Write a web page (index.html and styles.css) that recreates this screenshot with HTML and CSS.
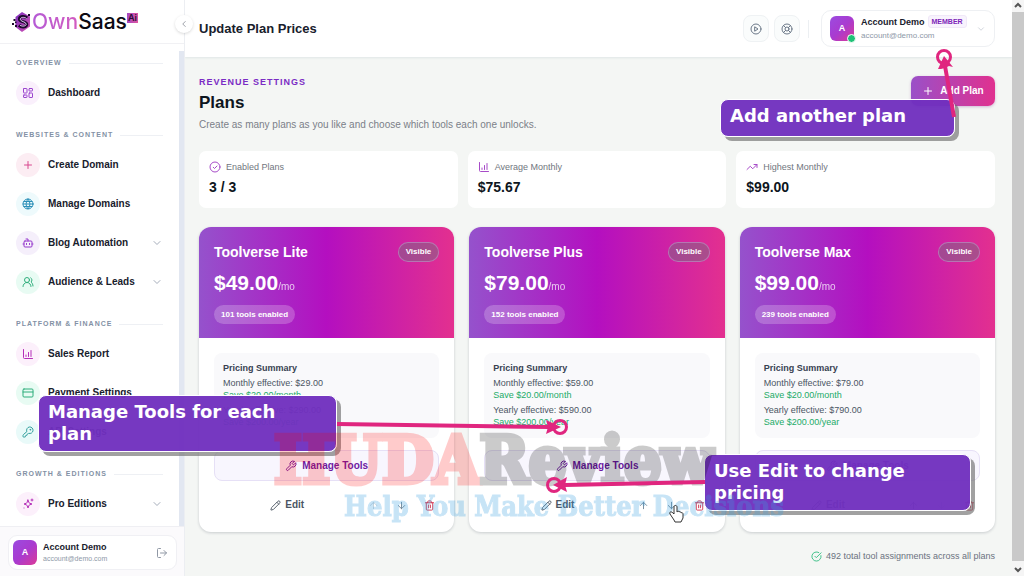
FILE: index.html
```html
<!DOCTYPE html>
<html lang="en">
<head>
    <meta charset="UTF-8">
    <meta name="viewport" content="width=device-width, initial-scale=1.0">
    <title>Update Plan Prices</title>
    <link rel="stylesheet" href="styles.css">
</head>
<body>
    <!-- Icon set -->
    <svg class="sprite" aria-hidden="true">
        <symbol id="i-grid" viewBox="0 0 24 24"><rect x="3" y="3" width="7" height="9" rx="1"/><rect x="14" y="3" width="7" height="5" rx="1"/><rect x="14" y="12" width="7" height="9" rx="1"/><rect x="3" y="16" width="7" height="5" rx="1"/></symbol>
        <symbol id="i-plus" viewBox="0 0 24 24"><path d="M5 12h14M12 5v14"/></symbol>
        <symbol id="i-globe" viewBox="0 0 24 24"><circle cx="12" cy="12" r="10"/><path d="M12 2a14.5 14.5 0 0 0 0 20 14.5 14.5 0 0 0 0-20M2 12h20M4 7h16M4 17h16"/></symbol>
        <symbol id="i-bot" viewBox="0 0 24 24"><path d="M12 8V4H8M2 14h2M20 14h2M15 13v2M9 13v2"/><rect x="4" y="8" width="16" height="12" rx="2"/></symbol>
        <symbol id="i-users" viewBox="0 0 24 24"><circle cx="10" cy="8" r="5"/><path d="M18 21a8 8 0 0 0-16 0M22 20c0-3.4-2-6.500-4-8a5 5 0 0 0-.5-8.300"/></symbol>
        <symbol id="i-chart" viewBox="0 0 24 24"><path d="M3 3v16a2 2 0 0 0 2 2h16M8 17v-3M13 17V9M18 17V5"/></symbol>
        <symbol id="i-card" viewBox="0 0 24 24"><rect x="2" y="4" width="20" height="16" rx="2"/><path d="M2 10h20"/></symbol>
        <symbol id="i-key" viewBox="0 0 24 24"><path d="M2.600 17.400A2 2 0 0 0 2 18.800V21a1 1 0 0 0 1 1h3a1 1 0 0 0 1-1v-1a1 1 0 0 1 1-1h1a1 1 0 0 0 1-1v-1a1 1 0 0 1 1-1h.2a2 2 0 0 0 1.400-.6l.8-.8a6.500 6.500 0 1 0-4-4z"/><circle cx="16.500" cy="7.500" r=".8"/></symbol>
        <symbol id="i-sparkles" viewBox="0 0 24 24"><path d="M12 4l2 5.500a1 1 0 0 0 .6.6L20 12l-5.400 2a1 1 0 0 0-.6.6L12 20l-2-5.400a1 1 0 0 0-.6-.6L4 12l5.400-1.900a1 1 0 0 0 .6-.6zM20 2v4M22 4h-4M4 20h.1"/></symbol>
        <symbol id="i-down" viewBox="0 0 24 24"><path d="M6 9l6 6 6-6"/></symbol>
        <symbol id="i-left" viewBox="0 0 24 24"><path d="M15 18l-6-6 6-6"/></symbol>
        <symbol id="i-logout" viewBox="0 0 24 24"><path d="M9 21H5a2 2 0 0 1-2-2V5a2 2 0 0 1 2-2h4M16 17l5-5-5-5M21 12H9"/></symbol>
        <symbol id="i-play" viewBox="0 0 24 24"><circle cx="12" cy="12" r="10"/><path d="M10 8l6 4-6 4z"/></symbol>
        <symbol id="i-buoy" viewBox="0 0 24 24"><circle cx="12" cy="12" r="10"/><circle cx="12" cy="12" r="4"/><path d="M5 5l4.200 4.200M14.800 9.200L19 5M14.800 14.800L19 19M9.200 14.800L5 19"/></symbol>
        <symbol id="i-check" viewBox="0 0 24 24"><circle cx="12" cy="12" r="10"/><path d="M8.500 12.500l2.500 2.500 5-5"/></symbol>
        <symbol id="i-done" viewBox="0 0 24 24"><path d="M21.800 10A10 10 0 1 1 17 3.300M8.500 11.500l3 3L22 4"/></symbol>
        <symbol id="i-trend" viewBox="0 0 24 24"><path d="M16 7h6v6M22 7l-8.500 8.500-5-5L2 17"/></symbol>
        <symbol id="i-wrench" viewBox="0 0 24 24"><path d="M14.700 6.300a1 1 0 0 0 0 1.400l1.600 1.600a1 1 0 0 0 1.400 0l3.770-3.770a6 6 0 0 1-7.940 7.940l-6.910 6.910a2.120 2.120 0 0 1-3-3l6.910-6.910a6 6 0 0 1 7.940-7.940z"/></symbol>
        <symbol id="i-pencil" viewBox="0 0 24 24"><path d="M21.200 6.800a1 1 0 0 0-4-4L3.800 16.200a2 2 0 0 0-.5.800L2 21.400a.5.500 0 0 0 .6.600L7 20.700a2 2 0 0 0 .8-.5zM15 5l4 4"/></symbol>
        <symbol id="i-arrow-up" viewBox="0 0 24 24"><path d="M5 12l7-7 7 7M12 19V5"/></symbol>
        <symbol id="i-arrow-down" viewBox="0 0 24 24"><path d="M12 5v14M19 12l-7 7-7-7"/></symbol>
        <symbol id="i-trash" viewBox="0 0 24 24"><path d="M3 6h18M19 6v14a2 2 0 0 1-2 2H7a2 2 0 0 1-2-2V6M8 6V4a2 2 0 0 1 2-2h4a2 2 0 0 1 2 2v2M10 11v6M14 11v6"/></symbol>
    </svg>

    <div class="app">
        <!-- Sidebar -->
        <aside class="sidebar">
            <a class="logo" href="#">
                <svg class="logo-mark" viewBox="0 0 20 22">
                    <defs>
                        <linearGradient id="hex" x1="0" y1="0" x2="1" y2="1"><stop offset="0" stop-color="#7a2bbd"/><stop offset="1" stop-color="#d455b4"/></linearGradient>
                    </defs>
                    <path d="M10 1l8 4.500v10L10 21 3.500 16V6z" fill="url(#hex)"/>
                    <path d="M15 7C12.500 4.800 7.500 5.300 7.500 8.300c0 3 7.200 2 7.200 5 0 3-5.200 3.300-7.700 1" fill="none" stroke="#1b0a2c" stroke-width="3.200"/>
                    <path d="M14.500 7.500C12.500 5.800 8.300 6 8.300 8.300c0 2.500 5.900 2.200 5.900 4.900 0 2-4 2.500-6.200 1" fill="none" stroke="#ecc9fb" stroke-width="1"/>
                    <path d="M1.500 8h2v2h-2zM0 12h2v2H0zM3 14h2v2H3zM16 3h2v2h-2zM3 10.500h1.500V12H3z" fill="#1b0a2c"/>
                </svg>
                <span class="logo-text"><span class="logo-own">Own</span>Saas</span><span class="logo-ai">Ai</span>
            </a>
            <div class="nav-wrap">
                <nav class="nav">
                    <h2 class="nav-label">Overview</h2>
                    <a class="nav-item" href="#"><span class="bubble violet"><svg class="icon"><use href="#i-grid"/></svg></span>Dashboard</a>

                    <h2 class="nav-label">Websites &amp; Content</h2>
                    <a class="nav-item" href="#"><span class="bubble rose"><svg class="icon"><use href="#i-plus"/></svg></span>Create Domain</a>
                    <a class="nav-item" href="#"><span class="bubble sky"><svg class="icon"><use href="#i-globe"/></svg></span>Manage Domains</a>
                    <a class="nav-item" href="#"><span class="bubble purple"><svg class="icon"><use href="#i-bot"/></svg></span>Blog Automation<svg class="icon caret"><use href="#i-down"/></svg></a>
                    <a class="nav-item" href="#"><span class="bubble green"><svg class="icon"><use href="#i-users"/></svg></span>Audience &amp; Leads<svg class="icon caret"><use href="#i-down"/></svg></a>

                    <h2 class="nav-label">Platform &amp; Finance</h2>
                    <a class="nav-item" href="#"><span class="bubble pink"><svg class="icon"><use href="#i-chart"/></svg></span>Sales Report</a>
                    <a class="nav-item" href="#"><span class="bubble green"><svg class="icon"><use href="#i-card"/></svg></span>Payment Settings</a>
                    <a class="nav-item" href="#"><span class="bubble teal"><svg class="icon"><use href="#i-key"/></svg></span>API Settings</a>

                    <h2 class="nav-label">Growth &amp; Editions</h2>
                    <a class="nav-item" href="#"><span class="bubble pink"><svg class="icon"><use href="#i-sparkles"/></svg></span>Pro Editions<svg class="icon caret"><use href="#i-down"/></svg></a>
                </nav>
                <div class="nav-track"></div>
            </div>
            <div class="side-foot">
                <div class="side-user">
                    <span class="avatar">A</span>
                    <div class="user-text">
                        <div class="user-name">Account Demo</div>
                        <div class="user-mail small">account@demo.com</div>
                    </div>
                    <button class="logout" aria-label="Log out"><svg class="icon"><use href="#i-logout"/></svg></button>
                </div>
            </div>
            <button class="collapse" aria-label="Collapse sidebar"><svg class="icon"><use href="#i-left"/></svg></button>
        </aside>

        <!-- Main column -->
        <div class="main">
            <header class="topbar">
                <div class="page-title">Update Plan Prices</div>
                <button class="round-btn" aria-label="Tutorials"><svg class="icon"><use href="#i-play"/></svg></button>
                <button class="round-btn" aria-label="Support"><svg class="icon"><use href="#i-buoy"/></svg></button>
                <span class="divider"></span>
                <button class="account">
                    <span class="avatar online">A</span>
                    <span class="user-text">
                        <span class="user-line"><span class="user-name">Account Demo</span><span class="badge">MEMBER</span></span>
                        <span class="user-mail">account@demo.com</span>
                    </span>
                    <svg class="icon caret"><use href="#i-down"/></svg>
                </button>
            </header>

            <main class="content">
                <div class="intro">
                    <div>
                        <div class="kicker">REVENUE SETTINGS</div>
                        <h1>Plans</h1>
                        <p class="lead">Create as many plans as you like and choose which tools each one unlocks.</p>
                    </div>
                    <button class="add-plan"><svg class="icon"><use href="#i-plus"/></svg>Add Plan</button>
                </div>

                <section class="stats">
                    <div class="stat">
                        <div class="stat-label"><svg class="icon"><use href="#i-check"/></svg>Enabled Plans</div>
                        <div class="stat-value">3 / 3</div>
                    </div>
                    <div class="stat">
                        <div class="stat-label"><svg class="icon"><use href="#i-chart"/></svg>Average Monthly</div>
                        <div class="stat-value">$75.67</div>
                    </div>
                    <div class="stat">
                        <div class="stat-label"><svg class="icon"><use href="#i-trend"/></svg>Highest Monthly</div>
                        <div class="stat-value">$99.00</div>
                    </div>
                </section>

                <section class="plans">
                    <article class="plan">
                        <div class="plan-head">
                            <div class="plan-top"><h3>Toolverse Lite</h3><span class="visible">Visible</span></div>
                            <div class="price">$49.00<small>/mo</small></div>
                            <span class="tools">101 tools enabled</span>
                        </div>
                        <div class="plan-body">
                            <div class="summary">
                                <h4>Pricing Summary</h4>
                                <p>Monthly effective: $29.00</p>
                                <p class="save">Save $20.00/month</p>
                                <p>Yearly effective: $290.00</p>
                                <p class="save">Save $200.00/year</p>
                            </div>
                            <button class="manage"><svg class="icon"><use href="#i-wrench"/></svg>Manage Tools</button>
                            <div class="actions">
                                <button class="edit"><svg class="icon"><use href="#i-pencil"/></svg>Edit</button>
                                <button class="act faded" aria-label="Move up" disabled><svg class="icon"><use href="#i-arrow-up"/></svg></button>
                                <button class="act" aria-label="Move down"><svg class="icon"><use href="#i-arrow-down"/></svg></button>
                                <button class="act danger" aria-label="Delete"><svg class="icon"><use href="#i-trash"/></svg></button>
                            </div>
                        </div>
                    </article>

                    <article class="plan">
                        <div class="plan-head">
                            <div class="plan-top"><h3>Toolverse Plus</h3><span class="visible">Visible</span></div>
                            <div class="price">$79.00<small>/mo</small></div>
                            <span class="tools">152 tools enabled</span>
                        </div>
                        <div class="plan-body">
                            <div class="summary">
                                <h4>Pricing Summary</h4>
                                <p>Monthly effective: $59.00</p>
                                <p class="save">Save $20.00/month</p>
                                <p>Yearly effective: $590.00</p>
                                <p class="save">Save $200.00/year</p>
                            </div>
                            <button class="manage"><svg class="icon"><use href="#i-wrench"/></svg>Manage Tools</button>
                            <div class="actions">
                                <button class="edit"><svg class="icon"><use href="#i-pencil"/></svg>Edit</button>
                                <button class="act" aria-label="Move up"><svg class="icon"><use href="#i-arrow-up"/></svg></button>
                                <button class="act" aria-label="Move down"><svg class="icon"><use href="#i-arrow-down"/></svg></button>
                                <button class="act danger" aria-label="Delete"><svg class="icon"><use href="#i-trash"/></svg></button>
                            </div>
                        </div>
                    </article>

                    <article class="plan">
                        <div class="plan-head">
                            <div class="plan-top"><h3>Toolverse Max</h3><span class="visible">Visible</span></div>
                            <div class="price">$99.00<small>/mo</small></div>
                            <span class="tools">239 tools enabled</span>
                        </div>
                        <div class="plan-body">
                            <div class="summary">
                                <h4>Pricing Summary</h4>
                                <p>Monthly effective: $79.00</p>
                                <p class="save">Save $20.00/month</p>
                                <p>Yearly effective: $790.00</p>
                                <p class="save">Save $200.00/year</p>
                            </div>
                            <button class="manage"><svg class="icon"><use href="#i-wrench"/></svg>Manage Tools</button>
                            <div class="actions">
                                <button class="edit"><svg class="icon"><use href="#i-pencil"/></svg>Edit</button>
                                <button class="act" aria-label="Move up"><svg class="icon"><use href="#i-arrow-up"/></svg></button>
                                <button class="act faded" aria-label="Move down" disabled><svg class="icon"><use href="#i-arrow-down"/></svg></button>
                                <button class="act danger" aria-label="Delete"><svg class="icon"><use href="#i-trash"/></svg></button>
                            </div>
                        </div>
                    </article>
                </section>

                <p class="total"><svg class="icon"><use href="#i-done"/></svg>492 total tool assignments across all plans</p>
            </main>
        </div>

        <!-- Page scrollbar -->
        <div class="scrollbar">
            <svg viewBox="0 0 12 12"><path d="M3 7l3-3 3 3"/></svg>
            <div class="thumb"></div>
            <svg viewBox="0 0 12 12"><path d="M3 4l3 3 3-3"/></svg>
        </div>
    </div>

    <!-- Tutorial callouts -->
    <div class="callout callout-add">Add another plan</div>
    <div class="callout callout-tools">Manage Tools for each plan</div>
    <div class="callout callout-edit">Use Edit to change pricing</div>

    <div class="watermark">
        <div class="mark-name"><span class="mark-red">HUDA</span>Review</div>
        <div class="mark-tag">Help You Make Better Decisions</div>
    </div>

    <svg class="arrows" viewBox="0 0 1024 576" aria-hidden="true">
        <g fill="none" stroke="#e0267f" stroke-width="4">
            <path d="M954 117L945 66M337 424l212 3M705 482l-140 3"/>
            <g stroke-width="3"><circle cx="944" cy="57" r="6.500"/><circle cx="560" cy="427" r="6.500"/><circle cx="554" cy="485" r="6.500"/></g>
        </g>
        <g fill="#e0267f">
            <path d="M944 56l9 11-4-1-4 2-4 1-3 0z"/>
            <path d="M561 427l-15 7 2-7-2-7z"/>
            <path d="M553 485l14-8-2 8 2 7z"/>
        </g>
        <path d="M674 520l-4-6c-1-2 1-3 3-1l1 1v-7c0-2 3-2 3 0v5c1-1 2-1 2 0 1-1 2 0 2 1 1-1 2 0 2 1v4l-2 4h-6z" fill="#fff" stroke="#333" stroke-width="1"/>
    </svg>
</body>
</html>
```

FILE: styles.css
```css
/* General Styles */
* {
    box-sizing: border-box;
}

body {
    margin: 0;
    overflow: hidden;
    font-family: "Liberation Sans", Arial, sans-serif;
    font-size: 10px;
    line-height: 12px;
    color: #18202c;
    background: #f4f6f4;
}

h1, h2, h3, h4, p {
    margin: 0;
}

button {
    padding: 0;
    border: none;
    background: none;
    font: inherit;
    color: inherit;
    cursor: pointer;
}

a {
    color: inherit;
    text-decoration: none;
}

.sprite {
    display: none;
}

.icon {
    width: 12px;
    height: 12px;
    flex: none;
    fill: none;
    stroke: currentColor;
    stroke-width: 2;
    stroke-linecap: round;
    stroke-linejoin: round;
}

.app {
    display: flex;
    height: 100vh;
}

/* Sidebar */
.sidebar {
    position: relative;
    display: flex;
    flex-direction: column;
    flex: none;
    width: 185px;
    background: #fff;
    border-right: 1px solid #eceef2;
}

.logo {
    display: flex;
    align-items: center;
    height: 44px;
    padding-left: 12px;
    border-bottom: 1px solid #f1f1f4;
}

.logo-mark {
    width: 20px;
    height: 22px;
}

.logo-text {
    font: 500 21px/24px Inter, sans-serif;
    color: #0c0a12;
}

.logo-own {
    color: transparent;
    background: linear-gradient(to right, #b45bd6, #d35bc0);
    background-clip: text;
}

.logo-ai {
    align-self: flex-start;
    margin-top: 13px;
    padding: 0 1px;
    font: 600 9px/10px Inter, sans-serif;
    color: #2a0d35;
    background: linear-gradient(to right, #a548c4, #e0559f);
}

.nav-wrap {
    display: flex;
    flex: 1;
    min-height: 0;
}

.nav {
    flex: 1;
    min-width: 0;
    padding: 13px 16px 0;
    overflow: hidden;
}

.nav-track {
    width: 5px;
    margin-top: 7px;
    background: #e2e7f1;
}

.nav-label {
    display: flex;
    align-items: center;
    gap: 7px;
    margin: 17px 0 4px;
    font-size: 7px;
    line-height: 12px;
    letter-spacing: 1px;
    text-transform: uppercase;
    white-space: nowrap;
    color: #8391a5;
}

.nav-label:first-child {
    margin-top: 0;
}

.nav-label::after {
    content: "";
    flex: 1;
    height: 1px;
    background: #eef0f4;
}

.nav-item {
    display: flex;
    align-items: center;
    gap: 8px;
    height: 39px;
    font-weight: bold;
}

.bubble {
    display: flex;
    align-items: center;
    justify-content: center;
    width: 24px;
    height: 24px;
    border-radius: 50%;
}

.violet { color: #9b45cf; background: #faf0fc; }
.rose { color: #d8488f; background: #fcedf3; }
.sky { color: #2b8fb8; background: #eefafc; }
.purple { color: #9436cc; background: #f5effb; }
.green { color: #2fae7c; background: #e8fbf3; }
.pink { color: #b52fb9; background: #fcf0fb; }
.teal { color: #2f9f9c; background: #e9faf9; }

.caret {
    margin-left: auto;
    color: #a5adba;
}

.side-foot {
    padding: 8px 7px 6px 8px;
    background: #fbfafc;
    border-top: 1px solid #efeff3;
}

.side-user {
    display: flex;
    align-items: center;
    gap: 6px;
    padding: 4px 8px 4px 4px;
    background: #fff;
    border: 1px solid #f0f0f4;
    border-radius: 9px;
}

.avatar {
    position: relative;
    flex: none;
    width: 24px;
    height: 25px;
    border-radius: 6px;
    font-size: 9px;
    line-height: 25px;
    font-weight: bold;
    text-align: center;
    color: #fff;
    background: linear-gradient(135deg, #9b4be0, #a93bd0 50%, #dc3a97);
}

.online::after {
    content: "";
    position: absolute;
    right: -2px;
    bottom: -2px;
    width: 7px;
    height: 7px;
    border: 1px solid #fff;
    border-radius: 50%;
    background: #1fc277;
}

.user-text {
    display: block;
    text-align: left;
    white-space: nowrap;
}

.user-name {
    font-size: 9px;
    font-weight: bold;
}

.user-mail {
    display: block;
    font-size: 8px;
    color: #8e99a8;
}

.small {
    font-size: 7px;
}

.logout {
    display: flex;
    margin-left: auto;
    color: #9098a5;
}

.collapse {
    position: absolute;
    top: 15px;
    right: -9px;
    z-index: 1;
    display: flex;
    align-items: center;
    justify-content: center;
    width: 18px;
    height: 18px;
    border-radius: 50%;
    background: #fff;
    box-shadow: 0 1px 3px rgba(0, 0, 0, 0.15);
    color: #8a8f99;
}

.collapse .icon {
    width: 10px;
    height: 10px;
}

/* Main column */
.main {
    flex: 1;
    min-width: 0;
}

.topbar {
    display: flex;
    align-items: center;
    gap: 5px;
    height: 57px;
    padding: 0 17px 0 14px;
    background: #fff;
    box-shadow: 0 1px 2px #dfe6e6;
}

.page-title {
    margin-right: auto;
    font-size: 13px;
    line-height: 16px;
    font-weight: bold;
}

.round-btn {
    display: flex;
    align-items: center;
    justify-content: center;
    width: 26px;
    height: 27px;
    background: #fafcfc;
    border: 1px solid #eff2f4;
    border-radius: 8px;
    color: #6b7888;
}

.divider {
    width: 1px;
    height: 18px;
    margin: 0 7px 0 3px;
    background: #eceff2;
}

.account {
    display: flex;
    align-items: center;
    gap: 7px;
    min-width: 174px;
    height: 37px;
    padding: 0 8px;
    border: 1px solid #eef0f3;
    border-radius: 10px;
}

.account .user-text {
    line-height: 14px;
}

.account .caret {
    width: 10px;
    height: 10px;
    color: #c9ced6;
}

.user-line {
    display: flex;
    align-items: center;
    gap: 3px;
}

.badge {
    padding: 0 3px;
    font-size: 7px;
    line-height: 11px;
    font-weight: bold;
    color: #7d1fb8;
    background: #f8f3fd;
    border: 1px solid #f0e8f8;
    border-radius: 3px;
}

.content {
    padding: 19px 17px 0 14px;
}

.intro {
    display: flex;
    justify-content: space-between;
    align-items: flex-start;
}

.kicker {
    font-size: 9px;
    font-weight: bold;
    letter-spacing: 1px;
    color: #7b2cc4;
}

h1 {
    margin: 4px 0;
    font-size: 17px;
    line-height: 22px;
    color: #0d1520;
}

.lead {
    line-height: 14px;
    color: #7b8088;
}

.add-plan {
    display: flex;
    align-items: center;
    justify-content: center;
    gap: 6px;
    width: 84px;
    height: 30px;
    border-radius: 7px;
    font-weight: bold;
    color: #fff;
    background: linear-gradient(to right, #9a50c8, #e0318f);
    box-shadow: 0 1px 3px rgba(120, 40, 140, 0.3);
}

/* Stats */
.stats {
    display: grid;
    grid-template-columns: repeat(3, 1fr);
    gap: 10px;
    margin: 19px 0;
}

.stat {
    padding: 10px 10px 12px;
    background: #fff;
    border-radius: 7px;
}

.stat-label {
    display: flex;
    align-items: center;
    gap: 5px;
    font-size: 9px;
    color: #71767e;
}

.stat-label .icon {
    color: #a74bc8;
}

.stat-value {
    margin-top: 5px;
    font-size: 14px;
    line-height: 18px;
    font-weight: bold;
    color: #0d1520;
}

/* Plan cards */
.plans {
    display: grid;
    grid-template-columns: repeat(3, 1fr);
    gap: 15px;
}

.plan {
    overflow: hidden;
    background: #fff;
    border-radius: 12px;
    box-shadow: 0 1px 3px rgba(30, 40, 60, 0.2);
}

.plan-head {
    padding: 15px 15px 14px;
    color: #fff;
    background: linear-gradient(to right, #9552cc, #b40fc0 50%, #e3308f);
}

.plan-top {
    display: flex;
    justify-content: space-between;
    align-items: center;
    height: 20px;
}

.plan-top h3 {
    font-size: 14px;
    line-height: 20px;
}

.visible {
    padding: 0 7px;
    font-size: 8px;
    line-height: 18px;
    font-weight: bold;
    background: rgba(120, 110, 130, 0.5);
    border: 1px solid rgba(190, 150, 200, 0.6);
    border-radius: 10px;
}

.price {
    margin: 7px 0 8px;
    font-size: 21px;
    line-height: 28px;
    font-weight: bold;
}

.price small {
    font-size: 10px;
    line-height: 10px;
    font-weight: normal;
    opacity: 0.75;
}

.tools {
    display: block;
    width: fit-content;
    padding: 0 7px;
    font-size: 8px;
    line-height: 19px;
    font-weight: bold;
    background: rgba(255, 255, 255, 0.22);
    border-radius: 10px;
}

.plan-body {
    padding: 15px 15px 17px;
}

.summary {
    padding: 9px 9px 10px;
    font-size: 9px;
    color: #4b5563;
    background: #f9f9fb;
    border-radius: 8px;
}

.summary h4 {
    margin-bottom: 3px;
    font-size: 9px;
    color: #374151;
}

.save {
    color: #22ab68;
}

.save + p {
    margin-top: 3px;
}

.manage {
    display: flex;
    align-items: center;
    justify-content: center;
    gap: 5px;
    width: 100%;
    height: 31px;
    margin: 12px 0 14px;
    font-weight: bold;
    color: #6d1aa3;
    background: #f8f6fe;
    border: 1px solid #e6e0f6;
    border-radius: 8px;
}

.actions {
    display: flex;
    gap: 8px;
    height: 20px;
}

.edit,
.act {
    display: flex;
    align-items: center;
    justify-content: center;
    gap: 4px;
    font-weight: bold;
    color: #4b5563;
}

.edit {
    flex: 1;
    padding-left: 5px;
}

.edit .icon,
.act .icon {
    width: 11px;
    height: 11px;
}

.act {
    width: 20px;
    color: #6f8597;
}

.faded {
    opacity: 0.35;
}

.danger {
    color: #cf3450;
}

.total {
    display: flex;
    align-items: center;
    justify-content: flex-end;
    gap: 4px;
    margin-top: 18px;
    font-size: 9px;
    color: #6b7280;
}

.total .icon {
    width: 11px;
    height: 11px;
    color: #35bd82;
}

/* Page scrollbar */
.scrollbar {
    display: flex;
    flex-direction: column;
    width: 12px;
    background: #f5f5f5;
}

.scrollbar svg {
    width: 12px;
    height: 12px;
    fill: none;
    stroke: #555;
    stroke-width: 2;
}

.thumb {
    flex: 1;
    margin-bottom: 3px;
    background: #c9c9c9;
}

/* Tutorial callouts */
.callout {
    position: absolute;
    padding: 5px 16px 5px 9px;
    font: bold 18px/22px "DejaVu Sans", sans-serif;
    color: #fff;
    background: rgba(112, 48, 190, 0.96);
    border: 1px solid #fff;
    border-radius: 8px;
    box-shadow: 4px 4px 0 rgba(110, 110, 110, 0.65);
}

.callout-add {
    top: 99px;
    left: 720px;
    width: 235px;
    height: 38px;
}

.callout-tools {
    top: 395px;
    left: 38px;
    width: 299px;
    height: 57px;
}

.callout-edit {
    top: 454px;
    left: 704px;
    width: 267px;
    height: 57px;
}

.watermark {
    position: absolute;
    top: 425px;
    left: 274px;
    font-family: "DejaVu Serif Condensed", "DejaVu Serif", serif;
    font-weight: bold;
    white-space: nowrap;
}

.mark-name {
    font-size: 66px;
    line-height: 70px;
    color: #000;
    -webkit-text-stroke: 5px;
    opacity: 0.2;
}

.mark-red {
    color: #f00;
    -webkit-text-stroke-color: #f00;
}

.mark-tag {
    padding-left: 70px;
    font-size: 27px;
    line-height: 24px;
    color: #3aa0e0;
    -webkit-text-stroke: 1px;
    opacity: 0.28;
}

.arrows {
    position: absolute;
    top: 0;
    left: 0;
    width: 1024px;
    height: 576px;
    pointer-events: none;
}
```
